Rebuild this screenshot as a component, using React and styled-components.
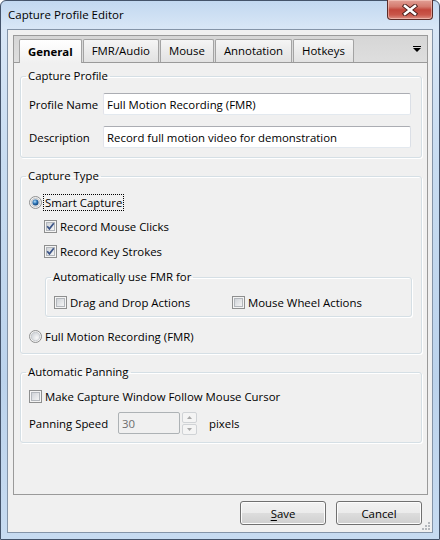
import styled, { createGlobalStyle } from 'styled-components'

const GlobalStyle = createGlobalStyle`
  html, body { margin: 0; padding: 0; background: #fff; }
  body {
    font-family: "Open Sans", "Liberation Sans", sans-serif;
    font-size: 11.4px;
    color: #000;
  }
  * { box-sizing: border-box; }
`

const Window = styled.div`
  width: 440px;
  height: 540px;
  display: flex;
  flex-direction: column;
  padding: 0 6px 6px 6px;
  border: 1px solid #44536a;
  border-radius: 6px 6px 0 0;
  background: linear-gradient(180deg, #c2d8f0 0%, #d8e6f6 5%, #c8dcf1 30%, #bcd3ec 70%, #c7dbf1 100%);
`

const TitleBar = styled.div`
  height: 28px;
  display: flex;
  align-items: flex-start;
  padding-left: 1px;
`

const Title = styled.div`
  font-size: 11.5px;
  line-height: 28px;
  color: #000;
`

const CloseButton = styled.div`
  margin-left: auto;
  margin-top: -1px;
  width: 46px;
  height: 20px;
  display: flex;
  align-items: center;
  justify-content: center;
  border: 1px solid #5b2c28;
  border-top: none;
  border-radius: 0 0 4px 4px;
  background: linear-gradient(180deg, #e2a096 0%, #d47a6e 35%, #c2463b 52%, #c9574a 78%, #dc8f84 100%);
  box-shadow: inset 0 0 0 1px rgba(255, 220, 210, 0.5);
`

const Client = styled.div`
  flex: 1;
  position: relative;
  display: flex;
  flex-direction: column;
  padding: 5px 4px 7px 5px;
  border: 1px solid #8494a8;
  background: #f0f0f0;
`

const TabControl = styled.div`
  flex: 1;
  display: flex;
  flex-direction: column;
  border: 1px solid #9a9a9a;
`

const TabStrip = styled.div`
  height: 27px;
  display: flex;
  align-items: flex-end;
  gap: 0;
  padding: 0 0 0 5px;
  border-bottom: 1px solid #9a9a9a;
  background: linear-gradient(180deg, #d6d6d6 0%, #dedede 100%);
`

const Tab = styled.div`
  margin-bottom: ${p => (p.$active ? '-1px' : '0')};
  margin-right: 1px;
  height: ${p => (p.$active ? '24px' : '23px')};
  padding: 0 8px;
  display: flex;
  align-items: center;
  font-size: 11.4px;
  font-weight: ${p => (p.$active ? 700 : 400)};
  border: 1px solid #a3a3a3;
  border-bottom: none;
  border-radius: 2px 2px 0 0;
  background: ${p =>
    p.$active
      ? 'linear-gradient(180deg, #ffffff 0%, #f7f7f7 60%, #f0f0f0 100%)'
      : 'linear-gradient(180deg, #f5f5f5 0%, #ebebeb 50%, #e2e2e2 100%)'};
  span {
    margin-top: -1px;
  }
`

const TabMenu = styled.div`
  margin-left: auto;
  align-self: center;
  margin-right: 6px;
  display: flex;
`

const Pane = styled.div`
  flex: 1;
  display: flex;
  flex-direction: column;
  gap: 10px;
  padding: 5px 5px 0 6px;
  background: #f0f0f0;
`

const Group = styled.fieldset`
  margin: ${p => p.$mt || 0}px 0 0 ${p => p.$ml || 0}px;
  min-width: 0;
  padding: ${p => p.$pt}px 9px ${p => p.$pb}px 8px;
  border: 1px solid #d5dfe5;
  border-radius: 3px;
  box-shadow: inset 1px 1px 0 #fff, 1px 1px 0 #fff;
  display: flex;
  flex-direction: column;
`

const Legend = styled.legend`
  padding: 0 2px;
  margin-left: -3px;
  line-height: 16px;
  color: #000;
`

const FieldRow = styled.div`
  display: flex;
  align-items: center;
  height: 22px;
  margin-top: ${p => p.$mt || 0}px;
`

const FieldLabel = styled.label`
  width: ${p => p.$w}px;
  flex: none;
`

const TextInput = styled.input`
  width: ${p => p.$w}px;
  height: 22px;
  padding: 0 3px;
  font: inherit;
  color: ${p => (p.disabled ? '#6d6d6d' : '#000')};
  background: ${p => (p.disabled ? '#f0f0f0' : '#fff')};
  border: 1px solid;
  border-color: ${p =>
    p.disabled ? '#adb2b5' : '#abadb3 #dbdfe6 #e3e9ef #e2e3ea'};
  border-radius: 2px;
  outline: none;
`

const OptionRow = styled.div`
  display: flex;
  align-items: center;
  gap: 3px;
  height: 18px;
  margin-top: ${p => p.$mt || 0}px;
  margin-left: ${p => p.$indent || 0}px;
`

const OptionText = styled.span`
  padding: 0 1px;
  margin-left: -1px;
  line-height: 15px;
  outline: ${p => (p.$focus ? '1px dotted #000' : 'none')};
`

const OptionGrid = styled.div`
  display: grid;
  grid-template-columns: 178px 1fr;
`

const SpinBox = styled.div`
  display: flex;
  align-items: center;
  gap: 2px;
`

const Spinner = styled.div`
  width: 15px;
  height: 23px;
  display: flex;
  flex-direction: column;
  gap: 1px;
`

const SpinButton = styled.div`
  flex: 1;
  display: flex;
  align-items: center;
  justify-content: center;
  border: 1px solid #d0d3d6;
  border-radius: 2px;
  background: #f4f4f4;
`

const Unit = styled.span`
  margin-left: 12px;
`

const Footer = styled.div`
  display: flex;
  justify-content: flex-end;
  gap: 10px;
  padding: 6px 6px 0 0;
`

const Button = styled.button`
  width: 86px;
  height: 24px;
  font: inherit;
  color: #000;
  border: 1px solid #707070;
  border-radius: 3px;
  background: linear-gradient(180deg, #f2f2f2 0%, #ebebeb 48%, #dddddd 50%, #cfcfcf 100%);
  box-shadow: inset 0 0 0 1px #fcfcfc;
  padding: 0;
  u { text-decoration-thickness: 1px; text-underline-offset: 2px; }
`

const Grip = styled.svg`
  position: absolute;
  right: 1px;
  bottom: 1px;
`

function Checkbox({ checked }) {
  return (
    <svg width="13" height="13" viewBox="0 0 13 13">
      <defs>
        <linearGradient id="cbg" x1="0" y1="0" x2="1" y2="1">
          <stop offset="0" stopColor="#cdd1d6" />
          <stop offset="1" stopColor="#f6f6f6" />
        </linearGradient>
      </defs>
      <rect x="0.5" y="0.5" width="12" height="12" fill="#f4f4f4" stroke="#8e8f8f" />
      <rect x="2.5" y="2.5" width="8" height="8" fill="url(#cbg)" stroke="#b3b7bc" />
      {checked && (
        <path d="M3.2 6.3 L5.4 8.8 L9.8 3.2" fill="none" stroke="#3b5487" strokeWidth="1.7" />
      )}
    </svg>
  )
}

function Radio({ checked }) {
  return (
    <svg width="13" height="13" viewBox="0 0 13 13">
      <defs>
        <radialGradient id="rbg" cx="0.65" cy="0.65" r="0.7">
          <stop offset="0" stopColor="#f8f8f8" />
          <stop offset="1" stopColor="#cfd3d8" />
        </radialGradient>
        <radialGradient id="rdot" cx="0.4" cy="0.35" r="0.7">
          <stop offset="0" stopColor="#b6e0fb" />
          <stop offset="0.5" stopColor="#2c74b6" />
          <stop offset="1" stopColor="#103c6e" />
        </radialGradient>
      </defs>
      <circle cx="6.5" cy="6.5" r="6" fill="#f4f4f4" stroke="#8e8f8f" />
      <circle cx="6.5" cy="6.5" r="4.3" fill="url(#rbg)" stroke="#c0c4c8" strokeWidth="0.8" />
      {checked && <circle cx="6.5" cy="6.5" r="3" fill="url(#rdot)" />}
    </svg>
  )
}

export default function App() {
  return (
    <>
      <GlobalStyle />
      <Window>
        <TitleBar>
          <Title>Capture Profile Editor</Title>
          <CloseButton>
            <svg width="16" height="12" viewBox="0 0 16 12">
              <path
                d="M3 2 L13 10 M13 2 L3 10"
                stroke="#4a1e1a"
                strokeWidth="4.4"
                strokeLinecap="square"
              />
              <path
                d="M3 2 L13 10 M13 2 L3 10"
                stroke="#ffffff"
                strokeWidth="2.6"
                strokeLinecap="square"
              />
            </svg>
          </CloseButton>
        </TitleBar>
        <Client>
          <TabControl>
            <TabStrip>
              <Tab $active><span>General</span></Tab>
              <Tab><span>FMR/Audio</span></Tab>
              <Tab><span>Mouse</span></Tab>
              <Tab><span>Annotation</span></Tab>
              <Tab><span>Hotkeys</span></Tab>
              <TabMenu>
                <svg width="8" height="6" viewBox="0 0 8 6">
                  <rect x="0" y="0" width="8" height="1" fill="#000" />
                  <path d="M0 2 H8 L4 6 Z" fill="#000" />
                </svg>
              </TabMenu>
            </TabStrip>
            <Pane>
              <Group $pt={9} $pb={9}>
                <Legend>Capture Profile</Legend>
                <FieldRow>
                  <FieldLabel $w={74}>Profile Name</FieldLabel>
                  <TextInput $w={308} defaultValue="Full Motion Recording (FMR)" />
                </FieldRow>
                <FieldRow $mt={11}>
                  <FieldLabel $w={74}>Description</FieldLabel>
                  <TextInput $w={308} defaultValue="Record full motion video for demonstration" />
                </FieldRow>
              </Group>

              <Group $pt={9} $pb={8}>
                <Legend>Capture Type</Legend>
                <OptionRow>
                  <Radio checked />
                  <OptionText $focus>Smart Capture</OptionText>
                </OptionRow>
                <OptionRow $mt={6} $indent={15}>
                  <Checkbox checked />
                  <OptionText>Record Mouse Clicks</OptionText>
                </OptionRow>
                <OptionRow $mt={7} $indent={15}>
                  <Checkbox checked />
                  <OptionText>Record Key Strokes</OptionText>
                </OptionRow>
                <Group $ml={16} $mt={9} $pt={8} $pb={5}>
                  <Legend>Automatically use FMR for</Legend>
                  <OptionGrid>
                    <OptionRow>
                      <Checkbox />
                      <OptionText>Drag and Drop Actions</OptionText>
                    </OptionRow>
                    <OptionRow>
                      <Checkbox />
                      <OptionText>Mouse Wheel Actions</OptionText>
                    </OptionRow>
                  </OptionGrid>
                </Group>
                <OptionRow $mt={10}>
                  <Radio />
                  <OptionText>Full Motion Recording (FMR)</OptionText>
                </OptionRow>
              </Group>

              <Group $pt={7} $pb={8}>
                <Legend>Automatic Panning</Legend>
                <OptionRow>
                  <Checkbox />
                  <OptionText>Make Capture Window Follow Mouse Cursor</OptionText>
                </OptionRow>
                <FieldRow $mt={7}>
                  <FieldLabel $w={89}>Panning Speed</FieldLabel>
                  <SpinBox>
                    <TextInput $w={62} disabled defaultValue="30" />
                    <Spinner>
                      <SpinButton>
                        <svg width="5" height="3" viewBox="0 0 5 3">
                          <path d="M0 3 L2.5 0 L5 3 Z" fill="#a8a8a8" />
                        </svg>
                      </SpinButton>
                      <SpinButton>
                        <svg width="5" height="3" viewBox="0 0 5 3">
                          <path d="M0 0 L5 0 L2.5 3 Z" fill="#a8a8a8" />
                        </svg>
                      </SpinButton>
                    </Spinner>
                  </SpinBox>
                  <Unit>pixels</Unit>
                </FieldRow>
              </Group>
            </Pane>
          </TabControl>
          <Footer>
            <Button><u>S</u>ave</Button>
            <Button>Cancel</Button>
          </Footer>
          <Grip width="9" height="9" viewBox="0 0 9 9">
            <g fill="#b4b8bd">
              <rect x="6" y="0" width="2" height="2" />
              <rect x="3" y="3" width="2" height="2" />
              <rect x="6" y="3" width="2" height="2" />
              <rect x="0" y="6" width="2" height="2" />
              <rect x="3" y="6" width="2" height="2" />
              <rect x="6" y="6" width="2" height="2" />
            </g>
          </Grip>
        </Client>
      </Window>
    </>
  )
}
